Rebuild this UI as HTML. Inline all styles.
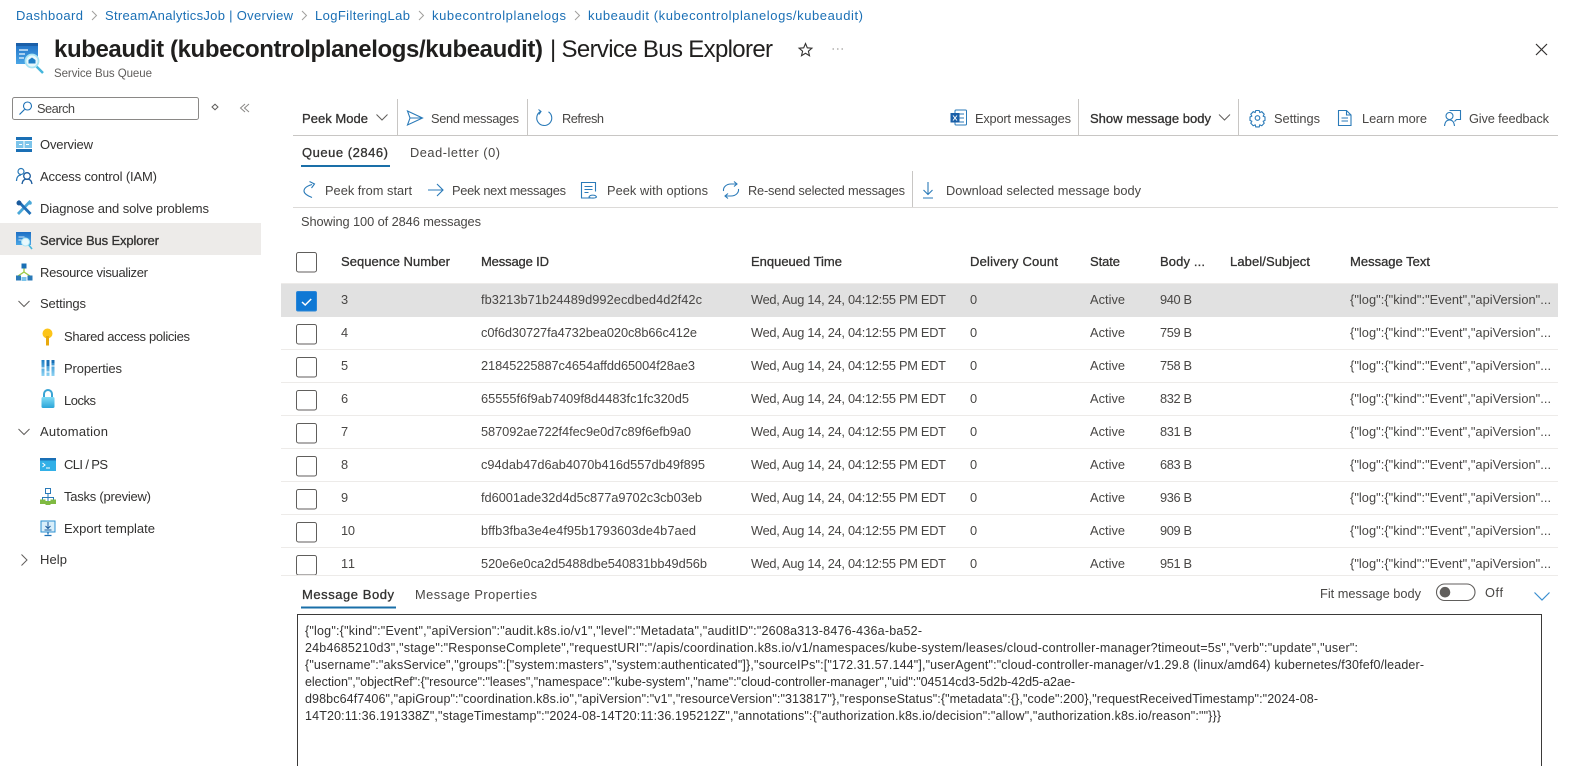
<!DOCTYPE html>
<html lang="en"><head><meta charset="utf-8"><title>kubeaudit | Service Bus Explorer</title>
<style>
html,body{margin:0;padding:0;background:#fff;width:1569px;height:766px;overflow:hidden}
svg{display:block}
text{font-family:"Liberation Sans",sans-serif;font-size:13px;fill:#323130;white-space:pre}
.l{fill:#1a6fb5}
.s{stroke:#323130;stroke-width:.3px}
.g{fill:#484644;font-size:12.800px}
.i{fill:none;stroke:#2a7ab8;stroke-width:1.100}
.k{fill:none;stroke:#605e5c;stroke-width:1}
.b{fill:none;stroke:#a19f9d;stroke-width:1}
.c{fill:#fff;stroke:#605e5c;stroke-width:1}
</style></head><body>
<svg width="1569" height="766" viewBox="0 0 1569 766" xmlns="http://www.w3.org/2000/svg">
<defs>
<linearGradient id="b" x1="0" y1="0" x2="0" y2="1"><stop offset="0" stop-color="#1f6fc4"/><stop offset="1" stop-color="#4aa6e6"/></linearGradient>
<linearGradient id="lk" x1="0" y1="0" x2="0" y2="1"><stop offset="0" stop-color="#7fdcf5"/><stop offset="1" stop-color="#2aa5d8"/></linearGradient>
<linearGradient id="p" x1="0" y1="0" x2="0" y2="1"><stop offset="0" stop-color="#1f7fc6"/><stop offset="1" stop-color="#8fd4f4"/></linearGradient>
</defs>

<!-- breadcrumb -->
<text class="l" x="16" y="20" textLength="67">Dashboard</text>
<path class="b" d="M92 11l4.500 4.500-4.500 4.500"/>
<text class="l" x="105" y="20" textLength="188">StreamAnalyticsJob | Overview</text>
<path class="b" d="M302 11l4.500 4.500-4.500 4.500"/>
<text class="l" x="315" y="20" textLength="95">LogFilteringLab</text>
<path class="b" d="M419 11l4.500 4.500-4.500 4.500"/>
<text class="l" x="432" y="20" textLength="134">kubecontrolplanelogs</text>
<path class="b" d="M575 11l4.500 4.500-4.500 4.500"/>
<text class="l" x="588" y="20" textLength="275">kubeaudit (kubecontrolplanelogs/kubeaudit)</text>

<!-- title -->
<rect x="16" y="43" width="22" height="21" fill="url(#b)"/>
<rect x="16" y="43" width="22" height="3" fill="#1b5fa8"/>
<path d="M19 50h9M19 54h6M19 58h5" stroke="#cfe6f8" stroke-width="1.500"/>
<path d="M36 66l7 7" stroke="#45b6dc" stroke-width="2.500"/>
<circle cx="32" cy="61" r="6.500" fill="#e8f8fc" stroke="#a8e4f4" stroke-width="1.800"/>
<path d="M28.500 60l3.500-2.500 3.500 2.500v3.500h-7z" fill="#1f7fc6"/>
<text x="54" y="57" style="font-size:24px;font-weight:700;fill:#201f1e" textLength="489">kubeaudit (kubecontrolplanelogs/kubeaudit)</text>
<text x="550" y="57" style="font-size:24px;fill:#201f1e" textLength="223">| Service Bus Explorer</text>
<text x="54" y="77" style="font-size:11.500px;fill:#605e5c" textLength="98">Service Bus Queue</text>
<path d="M805.500 43.500l1.800 4.300 4.600.4-3.500 3 1.100 4.500-4-2.400-4 2.400 1.100-4.500-3.500-3 4.600-.4z" fill="none" stroke="#323130" stroke-width="1.100"/>
<path d="M832.500 49h1.500M837 49h1.500M841.500 49h1.500" stroke="#a19f9d" stroke-width="1.300"/>
<path d="M1536 44l11 11M1547 44l-11 11" stroke="#323130" stroke-width="1.200"/>

<!-- sidebar search -->
<rect x="12.500" y="97.500" width="186" height="22" rx="2" fill="#fff" stroke="#8a8886"/>
<circle cx="27.500" cy="106" r="4" fill="none" stroke="#1a6fb5" stroke-width="1.100"/>
<path d="M24.500 109.500l-5 5" stroke="#1a6fb5" stroke-width="1.200"/>
<text class="g" x="37" y="113" textLength="38">Search</text>
<path d="M212 107l3-2.800 3 2.800-3 2.800z" fill="none" stroke="#605e5c"/>
<path d="M245 104l-4.500 4 4.500 4M249 104l-4.500 4 4.500 4" fill="none" stroke="#8a8886" stroke-width="1"/>

<!-- nav -->
<rect x="0" y="223" width="261" height="32" fill="#edebe9"/>

<rect x="16" y="137" width="16" height="3" fill="#1a6fb5"/><rect x="16" y="149" width="16" height="3" fill="#1a6fb5"/>
<rect x="16" y="141" width="16" height="7" fill="#7cc4ea"/>
<path d="M19 144.500h3M26 144.500h3M24 141v7" stroke="#fff" stroke-width="1"/>
<text x="40" y="149" textLength="53">Overview</text>

<circle cx="21" cy="171.500" r="3" fill="none" stroke="#2a7ab8" stroke-width="1.200"/>
<path d="M16.500 181c0-4 2-6 4.500-6" fill="none" stroke="#2a7ab8" stroke-width="1.200"/>
<circle cx="27" cy="176" r="3.300" fill="none" stroke="#1a5a9c" stroke-width="1.300"/>
<path d="M22 184c.5-3.500 2.500-5 5-5s4.500 1.500 5 5" fill="none" stroke="#1a5a9c" stroke-width="1.300"/>
<text x="40" y="181" textLength="117">Access control (IAM)</text>

<path d="M30.500 201l-12.500 13" stroke="#4aa8d8" stroke-width="2.800"/>
<path d="M18 201l12.500 13" stroke="#1f6fb8" stroke-width="2.800"/>
<circle cx="19" cy="203" r="2.500" fill="#1a5a9c"/><circle cx="30" cy="203" r="1.800" fill="#4aa8d8"/>
<text x="40" y="213" textLength="169">Diagnose and solve problems</text>

<rect x="16" y="232" width="15" height="13" fill="url(#b)"/>
<path d="M18.500 237h6M18.500 240h4" stroke="#cfe6f8"/>
<path d="M28 244l4 5" stroke="#45b6dc" stroke-width="1.600"/>
<circle cx="25.500" cy="242" r="4" fill="#e8f8fc" stroke="#a8e4f4"/>
<text class="s" x="40" y="245" textLength="119">Service Bus Explorer</text>

<path d="M24 267v5M24 272l-6 4M24 272l6 4" stroke="#9cc93f" stroke-width="1.300" fill="none"/>
<rect x="21.500" y="263.500" width="5" height="5" fill="#1a6fb5"/>
<rect x="16" y="275.500" width="5" height="5" fill="#2a7ab8"/><rect x="21.500" y="277" width="5" height="4" fill="#7cc4ea"/><rect x="27.500" y="275.500" width="5" height="5" fill="#2a7ab8"/>
<text x="40" y="277" textLength="108">Resource visualizer</text>

<path class="k" d="M18.500 301l5.500 5.500 5.500-5.500"/>
<text x="40" y="308" textLength="46">Settings</text>

<circle cx="47.500" cy="333.500" r="5" fill="#fcc419"/><path d="M47.500 336v9.500" stroke="#e8a90e" stroke-width="3"/>
<text x="64" y="341" textLength="126">Shared access policies</text>

<path d="M43 360v16M48 360v16M53 360v16" stroke="url(#p)" stroke-width="3"/>
<path d="M43 360h.01M48 360v6M53 360v3" stroke="#1a6fb5" stroke-width="3"/>
<path d="M41.500 368h3M46.500 372h3M51.500 366h3" stroke="#fff" stroke-width="1"/>
<text x="64" y="373" textLength="58">Properties</text>

<path d="M44 398v-4a4 4 0 0 1 8 0v4" fill="none" stroke="#3aa4d4" stroke-width="2"/>
<rect x="41.500" y="397" width="13" height="11" rx="1.500" fill="url(#lk)"/>
<text x="64" y="405" textLength="32">Locks</text>

<path class="k" d="M18.500 429l5.500 5.500 5.500-5.500"/>
<text x="40" y="436" textLength="68">Automation</text>

<rect x="40" y="458" width="16" height="13" fill="#32b0e7"/><rect x="40" y="458" width="16" height="2.500" fill="#1a6fb5"/>
<path d="M42.500 463l2.500 2-2.500 2M46 468h4" fill="none" stroke="#fff" stroke-width="1"/>
<text x="64" y="469" textLength="44">CLI / PS</text>

<rect x="45.500" y="488.500" width="5" height="5" fill="#fff" stroke="#2a7ab8"/>
<path d="M48 493.500v4M42.500 501v-3.500h11v3.500M48 497.500v3.500" fill="none" stroke="#2a7ab8"/>
<rect x="40" y="499.500" width="5.500" height="4.500" fill="#7fba42"/><rect x="45.500" y="501" width="5" height="4" fill="#7fba42"/><rect x="50.500" y="499.500" width="5.500" height="4.500" fill="#7fba42"/>
<text x="64" y="501" textLength="87">Tasks (preview)</text>

<rect x="41" y="521" width="14" height="11" fill="#d8eefa" stroke="#2a8fd0"/>
<path d="M48 522v6M45.500 526l2.500 2.500 2.500-2.500M44.500 530h7" fill="none" stroke="#1a5a9c"/>
<path d="M48 532v2.500M44.500 535.500h7" stroke="#1a6fb5" stroke-width="1.300"/>
<text x="64" y="533" textLength="91">Export template</text>

<path class="k" d="M21.500 554.500l5.500 5.500-5.500 5.500"/>
<text x="40" y="564" textLength="27">Help</text>

<!-- toolbar -->
<text class="s" x="302" y="123" textLength="66">Peek Mode</text>
<path class="k" d="M376.500 114.500l5.500 5.500 5.500-5.500"/>
<path d="M397.500 99v36M527.500 99v36M1078.500 99v36M1238.500 99v36" stroke="#c8c6c4"/>
<path class="i" d="M407.500 111l15 7-15 7 2.500-7zM410 118h12.500"/>
<text class="g" x="431" y="123" textLength="88">Send messages</text>
<path class="i" d="M540.500 111.500a7.500 7.500 0 1 0 8 .3M538.500 109.500l2.500 2-2 3" stroke-width="1.200"/>
<text class="g" x="562" y="123" textLength="42">Refresh</text>

<rect x="955" y="110" width="11.500" height="15" rx="1" fill="#fff" stroke="#2a7ab8"/>
<path d="M959 114h5M959 118h5M959 122h5" stroke="#2a7ab8"/>
<rect x="950.500" y="113" width="9" height="9.500" fill="#1a5fa8"/>
<path d="M953 115.500l4 5M957 115.500l-4 5" stroke="#fff"/>
<text class="g" x="975" y="123" textLength="96">Export messages</text>
<text class="s" x="1090" y="123" textLength="121">Show message body</text>
<path class="k" d="M1219 114.500l5.500 5.500 5.500-5.500"/>
<circle cx="1257.500" cy="118" r="2.300" class="i"/>
<path class="i" d="M1255.800 110.500h3.400l.6 2 2-.8 2.400 2.500-1 1.900 1.800.9v3.400l-1.800.9 1 1.900-2.400 2.500-2-.8-.6 2h-3.400l-.6-2-2 .8-2.400-2.500 1-1.900-1.800-.9v-3.400l1.800-.9-1-1.900 2.400-2.500 2 .8z"/>
<text class="g" x="1274" y="123" textLength="46">Settings</text>
<path class="i" d="M1338.500 110.500h8l4.500 4.500v10.500h-12.500zM1346.500 110.500v4.500h4.500M1341.500 118h6.500M1341.500 121h6.500" stroke="#1a6fb5"/>
<text class="g" x="1362" y="123" textLength="65">Learn more</text>
<circle class="i" cx="1449.500" cy="116" r="3.500"/>
<path class="i" d="M1444.500 126c.5-4.500 2.500-6 5-6s4.500 1.500 5 6M1449.500 110.500h11v9h-4l-2 2"/>
<text class="g" x="1469" y="123" textLength="80">Give feedback</text>
<path d="M293 135.500h1265" stroke="#c8c6c4"/>

<!-- tabs -->
<text class="s" x="302" y="157" textLength="86">Queue (2846)</text>
<rect x="301" y="165" width="89" height="2" fill="#1a6fa8"/>
<text class="g" x="410" y="157" textLength="90">Dead-letter (0)</text>

<!-- commands -->
<path class="i" d="M312 184.500c-5 1.500-8 4-8 6.500 0 2 3 4.500 8 6.500M309.500 181.500l5 2.500-3 4"/>
<text class="g" x="325" y="195" textLength="87">Peek from start</text>
<path class="i" d="M428 190h14.500M437 184l6 6-6 6"/>
<text class="g" x="452" y="195" textLength="114">Peek next messages</text>
<path class="i" d="M594 198h-12.500v-15.500h14v9M584.500 186.500h8M584.500 189.500h8M584.500 192.500h4"/>
<path class="i" d="M589 197c1-2.500 6.500-2.500 7.500 0-1 1.500-6.500 1.500-7.500 0z"/>
<text class="g" x="607" y="195" textLength="101">Peek with options</text>
<path class="i" d="M723.500 191c-.5-4 3-7 7.500-7h5.500M734 181.500l3 2.500-3 2.500M738.500 189c.5 4-3 7-7.500 7h-5.500M728 198.500l-3-2.500 3-2.500"/>
<text class="g" x="748" y="195" textLength="157">Re-send selected messages</text>
<path d="M912.500 171v36" stroke="#c8c6c4"/>
<path class="i" d="M928 182v12M923.500 190l4.500 4.500 4.500-4.500M923 198h10"/>
<text class="g" x="946" y="195" textLength="195">Download selected message body</text>
<path d="M293 207.500h1265" stroke="#dcdad8"/>

<text class="g" x="301" y="226" textLength="180">Showing 100 of 2846 messages</text>

<!-- table header -->
<rect class="c" x="296.500" y="252.500" width="20" height="19.500" rx="2"/>
<g class="hd">
<text class="s" x="341" y="266" textLength="109">Sequence Number</text>
<text class="s" x="481" y="266" textLength="68">Message ID</text>
<text class="s" x="751" y="266" textLength="91">Enqueued Time</text>
<text class="s" x="970" y="266" textLength="88">Delivery Count</text>
<text class="s" x="1090" y="266" textLength="30">State</text>
<text class="s" x="1160" y="266" textLength="45">Body ...</text>
<text class="s" x="1230" y="266" textLength="80">Label/Subject</text>
<text class="s" x="1350" y="266" textLength="80">Message Text</text>
</g>

<!-- rows -->
<rect x="281" y="284" width="1277" height="33" fill="#e1e1e1"/>
<path d="M281 349.500h1277M281 382.500h1277M281 415.500h1277M281 448.500h1277M281 481.500h1277M281 514.500h1277M281 547.500h1277" stroke="#edebe9"/>
<path d="M281 283.500h1277" stroke="#edebe9"/>

<rect x="296.500" y="291.500" width="20" height="19.500" rx="1.500" fill="#0f78d4" stroke="#2a86d8"/>
<path d="M302 302l3.200 3 6-6" fill="none" stroke="#fff" stroke-width="1.500"/>
<text class="g" x="341" y="304">3</text><text class="g" x="481" y="304" textLength="221">fb3213b71b24489d992ecdbed4d2f42c</text><text class="g" x="751" y="304" textLength="195">Wed, Aug 14, 24, 04:12:55 PM EDT</text><text class="g" x="970" y="304">0</text><text class="g" x="1090" y="304" textLength="35">Active</text><text class="g" x="1160" y="304" textLength="32">940 B</text><text class="g" x="1350" y="304" textLength="201">{"log":{"kind":"Event","apiVersion"...</text>

<rect class="c" x="296.500" y="324.500" width="20" height="19.500" rx="2"/>
<text class="g" x="341" y="337">4</text><text class="g" x="481" y="337" textLength="216">c0f6d30727fa4732bea020c8b66c412e</text><text class="g" x="751" y="337" textLength="195">Wed, Aug 14, 24, 04:12:55 PM EDT</text><text class="g" x="970" y="337">0</text><text class="g" x="1090" y="337" textLength="35">Active</text><text class="g" x="1160" y="337" textLength="32">759 B</text><text class="g" x="1350" y="337" textLength="201">{"log":{"kind":"Event","apiVersion"...</text>

<rect class="c" x="296.500" y="357.500" width="20" height="19.500" rx="2"/>
<text class="g" x="341" y="370">5</text><text class="g" x="481" y="370" textLength="214">21845225887c4654affdd65004f28ae3</text><text class="g" x="751" y="370" textLength="195">Wed, Aug 14, 24, 04:12:55 PM EDT</text><text class="g" x="970" y="370">0</text><text class="g" x="1090" y="370" textLength="35">Active</text><text class="g" x="1160" y="370" textLength="32">758 B</text><text class="g" x="1350" y="370" textLength="201">{"log":{"kind":"Event","apiVersion"...</text>

<rect class="c" x="296.500" y="390.500" width="20" height="19.500" rx="2"/>
<text class="g" x="341" y="403">6</text><text class="g" x="481" y="403" textLength="208">65555f6f9ab7409f8d4483fc1fc320d5</text><text class="g" x="751" y="403" textLength="195">Wed, Aug 14, 24, 04:12:55 PM EDT</text><text class="g" x="970" y="403">0</text><text class="g" x="1090" y="403" textLength="35">Active</text><text class="g" x="1160" y="403" textLength="32">832 B</text><text class="g" x="1350" y="403" textLength="201">{"log":{"kind":"Event","apiVersion"...</text>

<rect class="c" x="296.500" y="423.500" width="20" height="19.500" rx="2"/>
<text class="g" x="341" y="436">7</text><text class="g" x="481" y="436" textLength="210">587092ae722f4fec9e0d7c89f6efb9a0</text><text class="g" x="751" y="436" textLength="195">Wed, Aug 14, 24, 04:12:55 PM EDT</text><text class="g" x="970" y="436">0</text><text class="g" x="1090" y="436" textLength="35">Active</text><text class="g" x="1160" y="436" textLength="32">831 B</text><text class="g" x="1350" y="436" textLength="201">{"log":{"kind":"Event","apiVersion"...</text>

<rect class="c" x="296.500" y="456.500" width="20" height="19.500" rx="2"/>
<text class="g" x="341" y="469">8</text><text class="g" x="481" y="469" textLength="224">c94dab47d6ab4070b416d557db49f895</text><text class="g" x="751" y="469" textLength="195">Wed, Aug 14, 24, 04:12:55 PM EDT</text><text class="g" x="970" y="469">0</text><text class="g" x="1090" y="469" textLength="35">Active</text><text class="g" x="1160" y="469" textLength="32">683 B</text><text class="g" x="1350" y="469" textLength="201">{"log":{"kind":"Event","apiVersion"...</text>

<rect class="c" x="296.500" y="489.500" width="20" height="19.500" rx="2"/>
<text class="g" x="341" y="502">9</text><text class="g" x="481" y="502" textLength="221">fd6001ade32d4d5c877a9702c3cb03eb</text><text class="g" x="751" y="502" textLength="195">Wed, Aug 14, 24, 04:12:55 PM EDT</text><text class="g" x="970" y="502">0</text><text class="g" x="1090" y="502" textLength="35">Active</text><text class="g" x="1160" y="502" textLength="32">936 B</text><text class="g" x="1350" y="502" textLength="201">{"log":{"kind":"Event","apiVersion"...</text>

<rect class="c" x="296.500" y="522.500" width="20" height="19.500" rx="2"/>
<text class="g" x="341" y="535" textLength="14">10</text><text class="g" x="481" y="535" textLength="215">bffb3fba3e4e4f95b1793603de4b7aed</text><text class="g" x="751" y="535" textLength="195">Wed, Aug 14, 24, 04:12:55 PM EDT</text><text class="g" x="970" y="535">0</text><text class="g" x="1090" y="535" textLength="35">Active</text><text class="g" x="1160" y="535" textLength="32">909 B</text><text class="g" x="1350" y="535" textLength="201">{"log":{"kind":"Event","apiVersion"...</text>

<rect class="c" x="296.500" y="555.500" width="20" height="19.500" rx="2"/>
<text class="g" x="341" y="568" textLength="14">11</text><text class="g" x="481" y="568" textLength="226">520e6e0ca2d5488dbe540831bb49d56b</text><text class="g" x="751" y="568" textLength="195">Wed, Aug 14, 24, 04:12:55 PM EDT</text><text class="g" x="970" y="568">0</text><text class="g" x="1090" y="568" textLength="35">Active</text><text class="g" x="1160" y="568" textLength="32">951 B</text><text class="g" x="1350" y="568" textLength="201">{"log":{"kind":"Event","apiVersion"...</text>

<rect x="281" y="575" width="1288" height="191" fill="#fff"/>
<path d="M281 575.500h1277" stroke="#edebe9"/>

<!-- message panel -->
<text class="s" x="302" y="599" textLength="92">Message Body</text>
<rect x="301" y="606.500" width="95" height="2" fill="#1a6fa8"/>
<text class="g" x="415" y="599" textLength="122">Message Properties</text>
<text class="g" x="1320" y="598" textLength="101">Fit message body</text>
<rect x="1436.500" y="584" width="38.500" height="16.500" rx="8.200" fill="#fff" stroke="#605e5c" stroke-width="1.100"/>
<circle cx="1445" cy="592.200" r="5.300" fill="#605e5c"/>
<text class="g" x="1485" y="597" textLength="18">Off</text>
<path d="M1534.500 592.500l7.500 7.500 7.500-7.500" fill="none" stroke="#3a8fd0" stroke-width="1.200"/>

<rect x="297.500" y="614.500" width="1244" height="170" fill="#fff" stroke="#3b3a39"/>
<g>
<text x="305" y="635" textLength="617" style="font-size:12.500px">{"log":{"kind":"Event","apiVersion":"audit.k8s.io/v1","level":"Metadata","auditID":"2608a313-8476-436a-ba52-</text>
<text x="305" y="652" textLength="1053" style="font-size:12.500px">24b4685210d3","stage":"ResponseComplete","requestURI":"/apis/coordination.k8s.io/v1/namespaces/kube-system/leases/cloud-controller-manager?timeout=5s","verb":"update","user":</text>
<text x="305" y="669" textLength="1119" style="font-size:12.500px">{"username":"aksService","groups":["system:masters","system:authenticated"]},"sourceIPs":["172.31.57.144"],"userAgent":"cloud-controller-manager/v1.29.8 (linux/amd64) kubernetes/f30fef0/leader-</text>
<text x="305" y="686" textLength="770" style="font-size:12.500px">election","objectRef":{"resource":"leases","namespace":"kube-system","name":"cloud-controller-manager","uid":"04514cd3-5d2b-42d5-a2ae-</text>
<text x="305" y="703" textLength="1013" style="font-size:12.500px">d98bc64f7406","apiGroup":"coordination.k8s.io","apiVersion":"v1","resourceVersion":"313817"},"responseStatus":{"metadata":{},"code":200},"requestReceivedTimestamp":"2024-08-</text>
<text x="305" y="720" textLength="916" style="font-size:12.500px">14T20:11:36.191338Z","stageTimestamp":"2024-08-14T20:11:36.195212Z","annotations":{"authorization.k8s.io/decision":"allow","authorization.k8s.io/reason":""}}}</text>
</g>
</svg>
</body></html>
